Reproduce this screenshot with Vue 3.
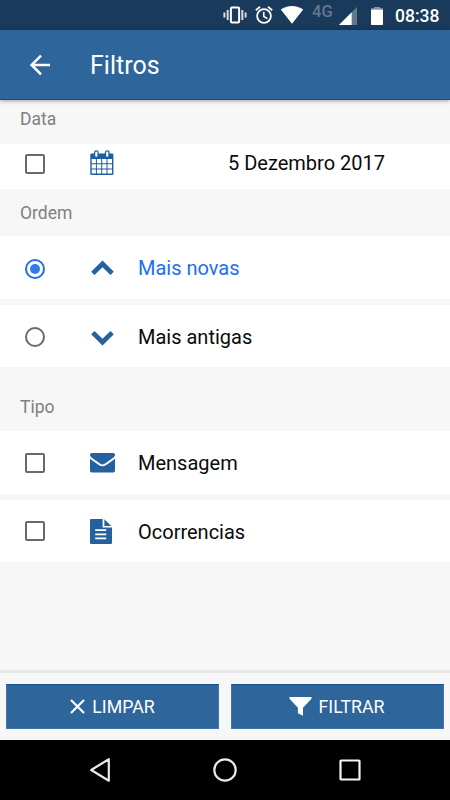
<template>
  <div class="screen">
    <div class="status-bar">
      <svg class="vibrate" width="24" height="20" viewBox="0 0 24 20">
        <rect x="7.9" y="2.6" width="8.2" height="14.8" rx="1" fill="none" stroke="#fff" stroke-width="2" />
        <path d="M4.7 5v10M19.3 5v10M1.4 7.5v5M22.6 7.5v5" stroke="#d5dce3" stroke-width="2" />
      </svg>
      <svg class="alarm" width="18" height="20" viewBox="0 0 18 20">
        <circle cx="9" cy="11" r="6.9" fill="none" stroke="#fff" stroke-width="1.8" />
        <path d="M.8 5.2 5 1.8M17.2 5.2 13 1.8" stroke="#fff" stroke-width="1.8" />
        <path d="M8.8 6.8v4.7l3.6 2.2" fill="none" stroke="#fff" stroke-width="1.5" />
      </svg>
      <svg class="wifi" width="24" height="20" viewBox="0 0 24 20">
        <path d="M.8 4.4C7.2-.3 16.8-.3 23.2 4.4L12 18.8z" fill="#fff" />
      </svg>
      <span class="network">4G</span>
      <svg class="signal" width="18" height="18" viewBox="0 0 18 18">
        <path d="M0 18 18 0v18z" fill="#62788e" />
        <path d="M0 18 12.7 5.3V18z" fill="#fff" />
      </svg>
      <svg class="battery" width="12" height="18" viewBox="0 0 12 18">
        <path d="M3 0h6v1.2h3v1.3H0V1.2h3z" fill="#8796a6" />
        <rect y="2.5" width="12" height="15.5" rx=".6" fill="#fff" />
      </svg>
      <span class="clock">08:38</span>
    </div>

    <header class="toolbar">
      <svg class="back" width="22" height="22" viewBox="0 0 22 22">
        <path d="M21 11H2.800M12 1.600 2.600 11l9.400 9.400" fill="none" stroke="#fff" stroke-width="2.500" />
      </svg>
      <h1>Filtros</h1>
    </header>

    <main class="content">
      <h2 class="label-data">Data</h2>
      <div class="row row-date" @click="useDate = !useDate">
        <span class="checkbox" :class="{ checked: useDate }"></span>
        <span class="icon">
          <svg width="24" height="26" viewBox="0 0 24 26">
            <path fill-rule="evenodd" d="M1.500 3.500h20.700a1.200 1.200 0 0 1 1.200 1.200v19.100a1.200 1.200 0 0 1-1.200 1.200H1.500A1.200 1.200 0 0 1 .300 23.800V4.700A1.200 1.200 0 0 1 1.500 3.500zM1.700 9v4.300h4.200V9zm5.200 0v4.300h4.300V9zm5.300 0v4.300h4.300V9zm5.300 0v4.300H22V9zM1.700 14.300v4.200h4.200v-4.200zm5.200 0v4.200h4.300v-4.200zm5.300 0v4.200h4.300v-4.200zm5.300 0v4.200H22v-4.200zM1.700 19.500v4h4.200v-4zm5.200 0v4h4.300v-4zm5.300 0v4h4.300v-4zm5.300 0v4H22v-4z" fill="#1f5ea2" />
            <rect x="4.600" y=".9" width="3.500" height="6.400" rx="1.500" fill="#fff" stroke="#1f5ea2" stroke-width="1.300" />
            <rect x="15.500" y=".9" width="3.500" height="6.400" rx="1.500" fill="#fff" stroke="#1f5ea2" stroke-width="1.300" />
          </svg>
        </span>
        <span class="date">5 Dezembro 2017</span>
      </div>

      <h2 class="label-ordem">Ordem</h2>
      <div class="group">
        <div
          v-for="item in orders"
          :key="item.id"
          class="row"
          :class="{ selected: order === item.id }"
          @click="order = item.id"
        >
          <span class="radio"></span>
          <span class="icon chevron">
            <svg width="25" height="16" viewBox="0 0 25 16">
              <path v-if="item.id === 'new'" d="m12.500.6 11.300 11.200-3.300 3.300-8-7.900-8 7.900-3.300-3.300z" fill="#25619f" />
              <path v-else d="m12.500 15.400 11.300-11.200-3.300-3.300-8 7.900-8-7.900-3.300 3.300z" fill="#25619f" />
            </svg>
          </span>
          <span class="name">{{ item.name }}</span>
        </div>
      </div>

      <h2 class="label-tipo">Tipo</h2>
      <div class="group">
        <div v-for="item in types" :key="item.id" class="row" @click="item.checked = !item.checked">
          <span class="checkbox" :class="{ checked: item.checked }"></span>
          <span class="icon">
            <svg v-if="item.id === 'message'" width="25" height="20" viewBox="0 0 25 20">
              <path d="M1.800 0h21.400Q25 0 25 1.800V2.400Q24.200 4.100 22.500 5.300L15 10.500q-2.500 1.800-5 0L2.500 5.300Q.8 4.100 0 2.400V1.800Q0 0 1.800 0z" fill="#25619f" />
              <path d="M0 5.500q.7.900 1.600 1.500l7.500 5.200q3.400 2.300 6.800 0l7.500-5.200q.9-.6 1.600-1.500v12.200q0 1.800-1.800 1.800H1.800Q0 19.500 0 17.700z" fill="#25619f" />
            </svg>
            <svg v-else width="22" height="25" viewBox="0 0 22 25">
              <path d="M1 0h11.600v8.500H22V24q0 1-1 1H1q-1 0-1-1V1q0-1 1-1z" fill="#25619f" />
              <path d="M14.400.2 21.200 7h-6.800z" fill="#25619f" />
              <path d="M5.200 11.200h11M5.200 15.300h11M5.200 19.400h11" stroke="#fff" stroke-width="1.800" />
            </svg>
          </span>
          <span class="name">{{ item.name }}</span>
        </div>
      </div>
    </main>

    <footer class="actions">
      <button @click="clear">
        <svg class="close" width="15" height="15" viewBox="0 0 15 15">
          <path d="m1 1 13 13M14 1 1 14" stroke="#fff" stroke-width="2.200" />
        </svg>
        LIMPAR
      </button>
      <button>
        <svg class="funnel" width="23" height="19" viewBox="0 0 23 19">
          <path d="M.500 0h22v1.800L14 10.800v8L8.900 16.300v-5.500L.500 1.800z" fill="#fff" />
        </svg>
        FILTRAR
      </button>
    </footer>

    <nav class="nav-bar">
      <svg width="24" height="26" viewBox="0 0 24 26">
        <path d="M20.800 2.200v21.600L3.200 13z" fill="none" stroke="#e9e9e9" stroke-width="2.200" stroke-linejoin="round" />
      </svg>
      <svg width="24" height="26" viewBox="0 0 24 26">
        <circle cx="12" cy="13" r="10.700" fill="none" stroke="#e9e9e9" stroke-width="2.200" />
      </svg>
      <svg width="24" height="26" viewBox="0 0 24 26">
        <rect x="2.500" y="3.500" width="19" height="19" rx=".6" fill="none" stroke="#f5f5f5" stroke-width="2.200" />
      </svg>
    </nav>
  </div>
</template>

<script setup>
import { ref } from 'vue'

const useDate = ref(false)
const order = ref('new')

const orders = [
  { id: 'new', name: 'Mais novas' },
  { id: 'old', name: 'Mais antigas' }
]

const types = ref([
  { id: 'message', name: 'Mensagem', checked: false },
  { id: 'occurrence', name: 'Ocorrencias', checked: false }
])

const clear = () => {
  useDate.value = false
  order.value = 'new'
  types.value.forEach(t => { t.checked = false })
}
</script>

<style>
body { margin: 0; }
</style>

<style scoped>
.screen { display: flex; flex-direction: column; width: 450px; height: 800px; overflow: hidden; background: #f7f7f7; color: #0a0a0a; font-family: Roboto, "Noto Sans", sans-serif; }
svg { display: block; flex: none; }
.status-bar { box-sizing: border-box; flex: none; display: flex; align-items: center; height: 30px; padding-left: 223px; background: #1a3a5b; }
.alarm { margin-left: 8px; }
.wifi { margin-left: 7px; }
.network { width: 22px; margin: -7px 0 0 8px; color: #62788e; font-size: 16.5px; font-weight: 500; line-height: 18px; }
.signal { margin: 2px 0 0 5px; }
.battery { margin: 1px 0 0 14px; }
.clock { margin: 2px 0 0 12px; color: #fff; font-size: 17.5px; font-weight: 500; line-height: 20px; }
.toolbar { position: relative; flex: none; display: flex; align-items: center; box-sizing: border-box; height: 70px; padding-left: 29px; background: #2e659a; border-bottom: 1px solid #12508e; box-shadow: 0 1px 4px rgba(0,0,0,0.35); }
h1 { margin: 2px 0 0 39px; color: #fff; font-size: 25px; font-weight: 400; line-height: 30px; }
h2 { box-sizing: border-box; margin: 0; padding-left: 20px; color: #808080; font-size: 17.5px; font-weight: 400; line-height: 22px; }
.content { flex: 1; }
.label-data { height: 44px; padding-top: 8px; }
.label-ordem { height: 47px; padding-top: 13px; }
.label-tipo { height: 64px; padding-top: 29px; }
.group { display: flex; flex-direction: column; gap: 6px; }
.row { box-sizing: border-box; display: flex; align-items: center; height: 63px; padding-left: 25px; background: #fff; font-size: 20px; line-height: 26px; }
.row + .row { height: 62px; }
.row + .row .name { margin-top: 2px; }
.row + .row .chevron { margin-top: 3px; }
.row-date { height: 45px; padding-bottom: 6px; }
.row-date .icon { margin-bottom: 2px; }
.checkbox { box-sizing: border-box; width: 20px; height: 20px; border: 2px solid #6a6a6a; border-radius: 2px; }
.checkbox.checked { background: #1c6ff0; border-color: #1c6ff0; }
.radio { box-sizing: border-box; display: flex; align-items: center; justify-content: center; width: 20px; height: 20px; margin-top: 2px; border: 2px solid #6a6a6a; border-radius: 50%; }
.selected .radio { border-color: #1c6ff0; }
.selected .radio::after { content: ''; width: 10px; height: 10px; border-radius: 50%; background: #3478f0; }
.selected .name { color: #1c6ff0; }
.icon { width: 48px; margin-left: 45px; }
.chevron { margin-top: 1px; }
.date { margin: 0 0 2px 90px; }
.actions { flex: none; box-sizing: border-box; display: flex; gap: 12px; height: 70px; padding: 11px 6px; border-top: 3px solid #e8e8e8; }
.actions button { flex: 1; display: flex; align-items: center; justify-content: center; height: 45px; padding: 0; border: 1px solid #3e76ad; border-top-color: #12508e; background: #2e659a; color: #fff; font-family: inherit; font-size: 17.75px; cursor: pointer; }
.close { margin-right: 7px; }
.funnel { margin: 0 7px 0 -2px; }
.nav-bar { flex: none; display: flex; align-items: center; justify-content: center; gap: 101px; height: 60px; background: #000; }
</style>
